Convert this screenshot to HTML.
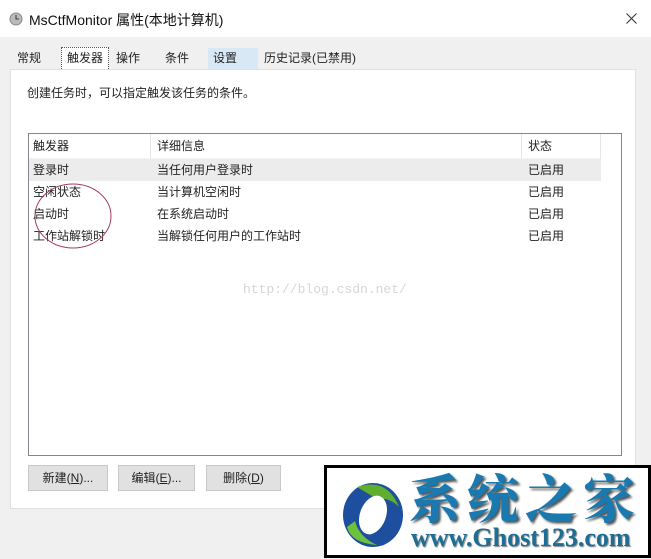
<!DOCTYPE html>
<html><head><meta charset="utf-8">
<style>
*{margin:0;padding:0;box-sizing:border-box}
body{width:651px;height:559px;overflow:hidden;background:#f0f0f0;font-family:"Liberation Sans","Noto Sans CJK SC",sans-serif;font-size:12px;color:#222;position:relative}
.abs{position:absolute}
.title{left:0;top:0;width:651px;height:38px;background:#fff;border-bottom:1px solid #f0f0f0}
.tab{top:48px;height:21px;line-height:20px;padding:0 5px;font-size:12px}
.panel{left:10px;top:69px;width:626px;height:440px;background:#fff;border:1px solid #e0e0e0}
.lv{left:28px;top:133px;width:594px;height:323px;border:1px solid #828790;background:#fff}
.row{position:absolute;left:0;height:22px;line-height:22px;font-size:12px}
.btn{top:465px;height:26px;line-height:24px;background:#e1e1e1;border:1px solid #c8c8c8;text-align:center;font-size:12px}
</style></head><body>
<div class="abs title"></div>
<svg class="abs" style="left:9px;top:12px" width="14" height="14" viewBox="0 0 14 14"><circle cx="7" cy="7" r="6" fill="#bbb" stroke="#888"/><path d="M7 3v4h3" stroke="#555" fill="none" stroke-width="1.3"/></svg>
<div class="abs" style="left:29px;top:10px;font-size:14px;color:#111">MsCtfMonitor 属性(本地计算机)</div>
<svg class="abs" style="left:626px;top:13px" width="11" height="11" viewBox="0 0 11 11"><path d="M0.5 0.5L10.5 10.5M10.5 0.5L0.5 10.5" stroke="#333" stroke-width="1"/></svg>

<div class="abs panel"></div>
<div class="abs tab" style="left:12px">常规</div>
<div class="abs tab" style="left:61px;top:47px;height:22px;background:#fff;border:1px dotted #555;border-bottom:none">触发器</div>
<div class="abs tab" style="left:111px">操作</div>
<div class="abs tab" style="left:160px;width:48px">条件</div>
<div class="abs tab" style="left:208px;width:50px;background:#d9e8f5">设置</div>
<div class="abs tab" style="left:259px">历史记录(已禁用)</div>

<div class="abs" style="left:27px;top:84px;font-size:12px">创建任务时，可以指定触发该任务的条件。</div>

<div class="abs lv">
 <div class="row" style="top:0;width:572px;height:25px;line-height:24px;border-bottom:1px solid #f2f2f2">
  <span class="abs" style="left:4px">触发器</span>
  <span class="abs" style="left:121px;top:0;height:25px;border-left:1px solid #e5e5e5;padding-left:6px">详细信息</span>
  <span class="abs" style="left:492px;top:0;height:25px;border-left:1px solid #e5e5e5;padding-left:6px;width:80px;border-right:1px solid #e5e5e5">状态</span>
 </div>
 <div class="row" style="top:25px;width:572px;background:#ececec"><span class="abs" style="left:4px">登录时</span><span class="abs" style="left:128px">当任何用户登录时</span><span class="abs" style="left:499px">已启用</span></div>
 <div class="row" style="top:47px;width:572px"><span class="abs" style="left:4px">空闲状态</span><span class="abs" style="left:128px">当计算机空闲时</span><span class="abs" style="left:499px">已启用</span></div>
 <div class="row" style="top:69px;width:572px"><span class="abs" style="left:4px">启动时</span><span class="abs" style="left:128px">在系统启动时</span><span class="abs" style="left:499px">已启用</span></div>
 <div class="row" style="top:91px;width:572px"><span class="abs" style="left:4px">工作站解锁时</span><span class="abs" style="left:128px">当解锁任何用户的工作站时</span><span class="abs" style="left:499px">已启用</span></div>
</div>
<svg class="abs" style="left:0;top:0" width="651" height="559"><ellipse cx="73" cy="216" rx="38" ry="32" fill="none" stroke="#a0405a" stroke-width="1"/></svg>
<div class="abs" style="left:243px;top:282px;font-family:'Liberation Mono',monospace;font-size:13px;color:#d6d6d6">http://blog.csdn.net/</div>

<div class="abs btn" style="left:28px;width:80px">新建(<u>N</u>)...</div>
<div class="abs btn" style="left:118px;width:77px">编辑(<u>E</u>)...</div>
<div class="abs btn" style="left:206px;width:75px">删除(<u>D</u>)</div>

<div class="abs" style="left:324px;top:465px;width:327px;height:93px;background:#000;padding:3px">
 <div style="width:100%;height:100%;background:#fff;position:relative">
  <svg class="abs" style="left:10px;top:9px" width="72" height="72" viewBox="0 0 72 72">
   <ellipse cx="36" cy="38" rx="30" ry="32" fill="#1d4f9e"/>
   <path d="M20 10 Q50 0 62 30 Q52 20 40 22 Z" fill="#5fae2e"/>
   <path d="M10 50 Q14 66 40 68 Q22 60 18 44 Z" fill="#6ec13a"/>
   <ellipse cx="36" cy="38" rx="13" ry="20" fill="#fff" transform="rotate(20 36 38)"/>
  </svg>
  <div class="abs" style="left:82px;top:-2px;font-family:'Noto Serif CJK SC',serif;font-weight:900;font-size:52px;letter-spacing:6px;line-height:60px;color:#1a7ab0;text-shadow:2px 2px 2px #555;white-space:nowrap">系统之家</div>
  <div class="abs" style="left:84px;top:56px;font-family:'Liberation Serif',serif;font-weight:bold;font-size:26px;line-height:28px;color:#1d6d94;text-shadow:1px 1px 1px #888;white-space:nowrap">www.Ghost123.com</div>
 </div>
</div>
</body></html>
